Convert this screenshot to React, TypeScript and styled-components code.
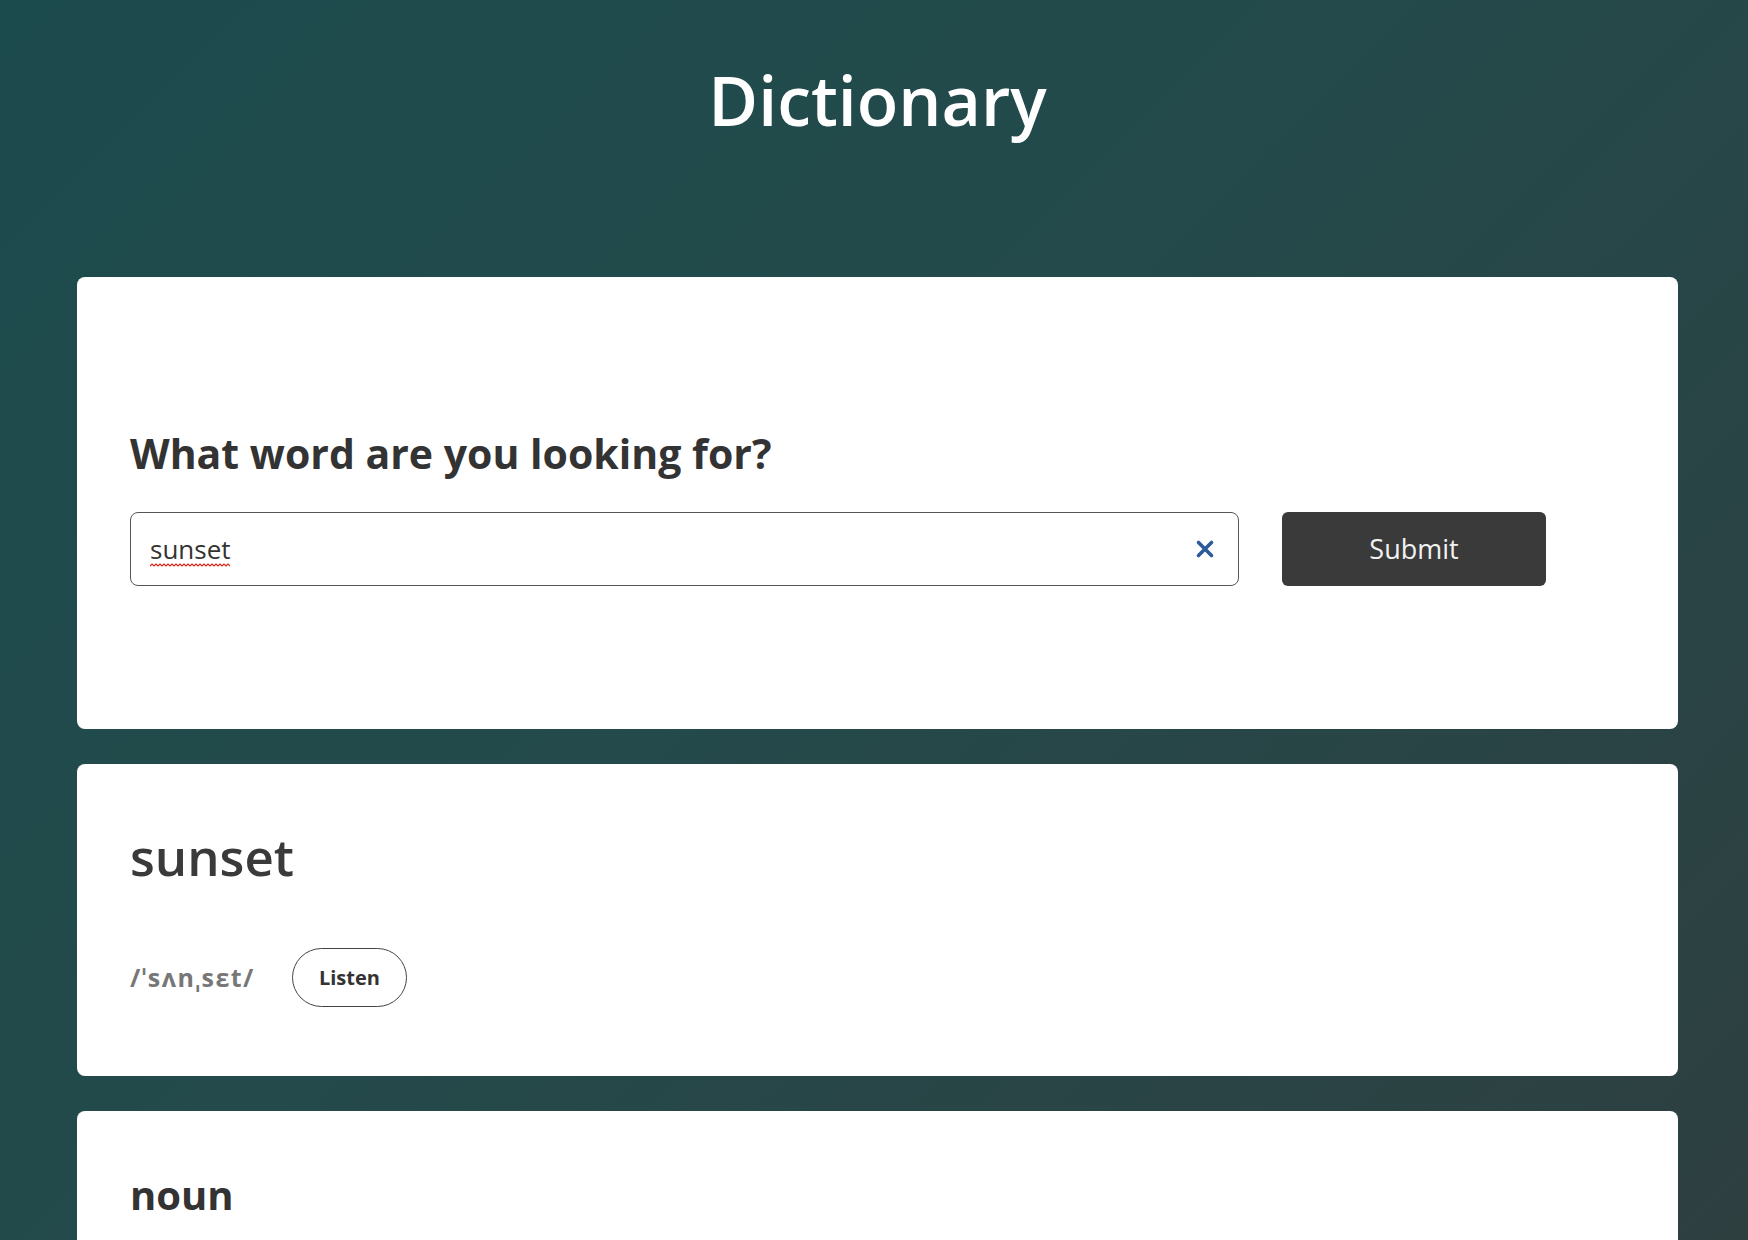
import React from "react";
import styled, { createGlobalStyle } from "styled-components";

const GlobalStyle = createGlobalStyle`
  html, body {
    margin: 0;
    padding: 0;
  }
  body {
    min-height: 100vh;
    font-family: "Open Sans", "Noto Sans", "DejaVu Sans", sans-serif;
    background: linear-gradient(135deg, #1c4b4d 0%, #244a4b 45%, #2e3f40 100%);
    background-attachment: fixed;
    color: #333;
  }
  * { box-sizing: border-box; }
`;

const Page = styled.main`
  padding: 0 70px 80px 77px;
`;

const Header = styled.header`
  padding-top: 59px;
  margin-bottom: 136px;
  text-align: center;
`;

const Title = styled.h1`
  margin: 0;
  font-size: 68px;
  line-height: 1.2;
  font-weight: 600;
  color: #ffffff;
`;

const Stack = styled.div`
  display: flex;
  flex-direction: column;
  gap: 35px;
`;

const Card = styled.section<{ $top: number; $bottom: number }>`
  background: #ffffff;
  border-radius: 8px;
  padding: ${(p) => p.$top}px 53px ${(p) => p.$bottom}px;
`;

const Question = styled.h2`
  margin: 0 0 34px;
  font-size: 41px;
  line-height: 1.2;
  font-weight: 700;
  color: #333;
`;

const SearchRow = styled.form`
  display: flex;
  align-items: center;
  gap: 43px;
`;

const Field = styled.div`
  position: relative;
  display: flex;
  align-items: center;
  width: 1109px;
  height: 74px;
  border: 1.5px solid #555;
  border-radius: 8px;
  padding: 0 20px 0 19px;
  background: #fff;
`;

const Input = styled.input`
  flex: 1;
  min-width: 0;
  border: none;
  outline: none;
  background: transparent;
  font-family: "Open Sans", "Noto Sans", sans-serif;
  font-size: 26px;
  color: #333;
  padding: 0;
`;

const Squiggle = styled.svg`
  position: absolute;
  left: 19px;
  top: 50px;
  pointer-events: none;
`;

const ClearButton = styled.button`
  display: flex;
  align-items: center;
  justify-content: center;
  width: 26px;
  height: 26px;
  padding: 0;
  border: none;
  background: transparent;
  cursor: pointer;
`;

const SubmitButton = styled.button`
  width: 264px;
  height: 74px;
  border: none;
  border-radius: 6px;
  background: #3a3a3a;
  color: #f2f2f2;
  font-family: "Open Sans", "Noto Sans", sans-serif;
  font-size: 27px;
  cursor: pointer;
`;

const Word = styled.h2`
  margin: 0 0 61px;
  font-size: 51px;
  line-height: 1.2;
  font-weight: 600;
  color: #3a3a3a;
`;

const PhoneticRow = styled.div`
  display: flex;
  align-items: center;
  gap: 37px;
`;

const Phonetic = styled.span`
  font-size: 25px;
  font-weight: 700;
  letter-spacing: 1.5px;
  color: #777;
`;

const ListenButton = styled.button`
  width: 115px;
  height: 59px;
  border: 1.5px solid #444;
  border-radius: 30px;
  background: #fff;
  color: #333;
  font-family: "Open Sans", "Noto Sans", sans-serif;
  font-size: 20px;
  font-weight: 700;
  cursor: pointer;
`;

const PartOfSpeech = styled.h3`
  margin: 0;
  font-size: 40px;
  line-height: 1.2;
  font-weight: 700;
  color: #333;
`;

function ClearIcon() {
  return (
    <svg width="20" height="20" viewBox="0 0 20 20" aria-hidden="true">
      <path
        d="M3.5 3.5 L16.5 16.5 M16.5 3.5 L3.5 16.5"
        stroke="#2d5a9b"
        strokeWidth="3.6"
        strokeLinecap="round"
        fill="none"
      />
    </svg>
  );
}

function SpellSquiggle({ width }: { width: number }) {
  let d = "M0 3";
  for (let x = 0; x < width; x += 4) {
    d += ` L${x + 2} 1 L${x + 4} 3`;
  }
  return (
    <Squiggle width={width} height="4" viewBox={`0 0 ${width} 4`} aria-hidden="true">
      <path d={d} stroke="#e2231a" strokeWidth="1.2" fill="none" />
    </Squiggle>
  );
}

export default function App() {
  return (
    <>
      <GlobalStyle />
      <Page>
        <Header>
          <Title>Dictionary</Title>
        </Header>
        <Stack>
          <Card $top={152} $bottom={143}>
            <Question>What word are you looking for?</Question>
            <SearchRow onSubmit={(e) => e.preventDefault()}>
              <Field>
                <Input type="text" defaultValue="sunset" spellCheck />
                <SpellSquiggle width={80} />
                <ClearButton type="button" aria-label="Clear">
                  <ClearIcon />
                </ClearButton>
              </Field>
              <SubmitButton type="submit">Submit</SubmitButton>
            </SearchRow>
          </Card>
          <Card $top={62} $bottom={69}>
            <Word>sunset</Word>
            <PhoneticRow>
              <Phonetic>/ˈsʌnˌsɛt/</Phonetic>
              <ListenButton type="button">Listen</ListenButton>
            </PhoneticRow>
          </Card>
          <Card $top={60} $bottom={160}>
            <PartOfSpeech>noun</PartOfSpeech>
          </Card>
        </Stack>
      </Page>
    </>
  );
}
